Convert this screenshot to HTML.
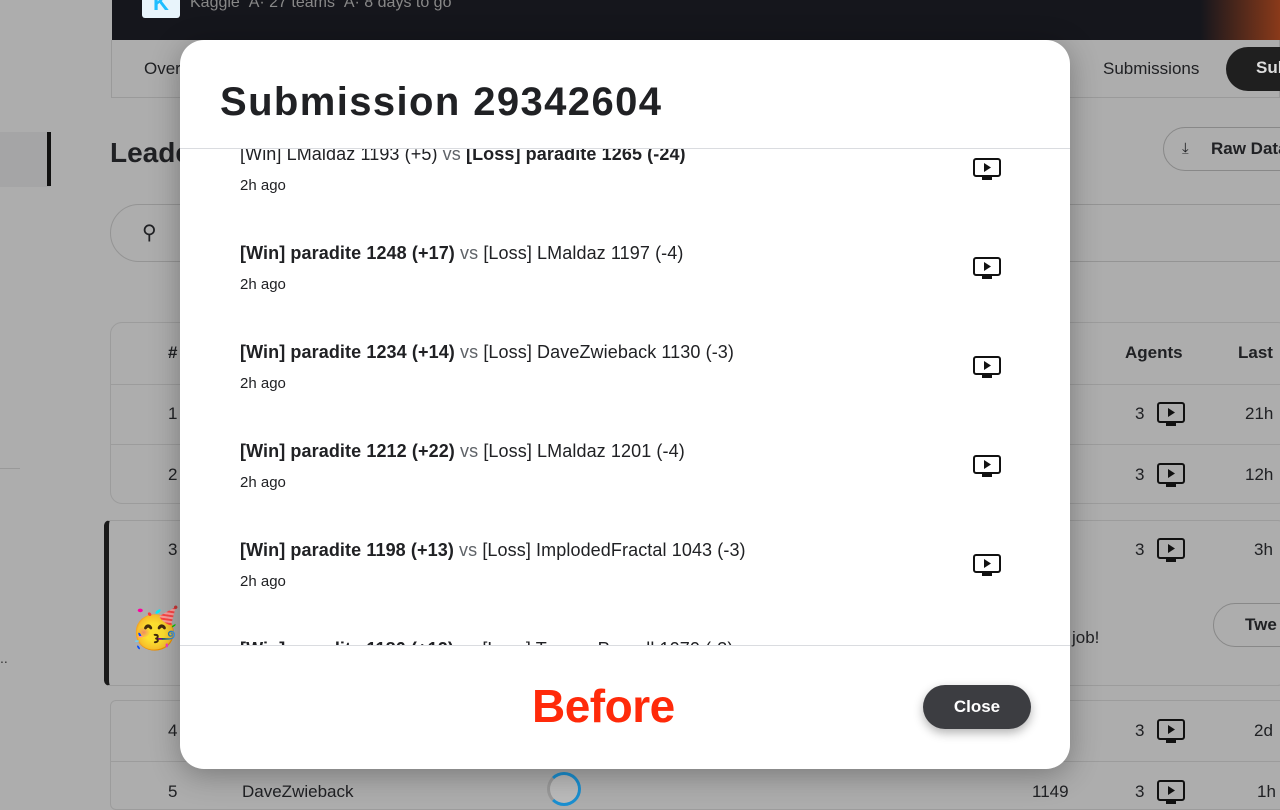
<!DOCTYPE html>
<html><head><meta charset="utf-8"><style>
*{margin:0;padding:0;box-sizing:border-box}
body{width:1280px;height:800px;overflow:hidden;background:#adadad;font-family:"Liberation Sans",Arial,sans-serif;position:relative;color:#202124}
.abs{position:absolute}
.hdr{left:112px;top:0;width:1168px;height:40px;background:#15161c}
.t{font-size:17px;color:#202124}
.modal{left:180px;top:40px;width:890px;height:729px;background:#fff;border-radius:24px;box-shadow:0 6px 30px rgba(0,0,0,.3);overflow:hidden}
.row{position:absolute;left:60px;font-size:18px;color:#202124}
.row .v{color:#5f6368}
.row .ago{position:absolute;left:0;top:33px;font-size:15px;color:#202124;white-space:nowrap}
.row .main{white-space:nowrap;letter-spacing:0.1px}
</style></head><body>
<div class="abs hdr"></div>
<div class="abs" style="left:142px;top:-8px;width:38px;height:26px;background:#e8f4fb;border-radius:3px;color:#20beff;font-weight:bold;font-size:22px;text-align:center;line-height:22px">K</div>
<div class="abs" style="left:190px;top:-6px;color:#888;font-size:16px">Kaggle &nbsp;A· 27 teams &nbsp;A· 8 days to go</div>
<div class="abs" style="left:1200px;top:0;width:80px;height:40px;background:linear-gradient(90deg,#15161c,#8a3a1a)"></div>
<div class="abs" style="left:111px;top:40px;width:1169px;height:58px;border:1px solid #9a9a9a;border-top:none"></div>
<div class="abs" style="left:144px;top:59px;font-size:17px">Over</div>
<div class="abs" style="left:1103px;top:59px;font-size:17px">Submissions</div>
<div class="abs" style="left:1226px;top:47px;width:80px;height:44px;background:#1f1f1f;border-radius:22px;color:#ddd;font-weight:bold;font-size:17px;padding:11px 30px">Sub</div>
<div class="abs" style="left:0;top:132px;width:50px;height:55px;background:#a5a5a6"></div>
<div class="abs" style="left:47px;top:132px;width:4px;height:54px;background:#111"></div>
<div class="abs" style="left:0;top:468px;width:20px;height:1px;background:#999"></div>
<div class="abs" style="left:0;top:650px;font-size:14px;color:#333">..</div>
<div class="abs" style="left:110px;top:137px;font-size:28px;font-weight:bold">Leaderboard</div>
<div class="abs" style="left:1163px;top:127px;width:140px;height:44px;border:1px solid #888;border-radius:22px;font-weight:bold;font-size:17px;padding:11px 0 0 47px">Raw Data</div>
<div class="abs" style="left:1182px;top:140px;font-size:15px">⤓</div>
<div class="abs" style="left:110px;top:204px;width:1200px;height:58px;border:1px solid #949494;border-radius:29px"></div>
<div class="abs" style="left:142px;top:220px;font-size:20px">⚲</div>
<div class="abs" style="left:110px;top:322px;width:1180px;height:182px;border:1px solid #9c9c9c;border-radius:12px"></div>
<div class="abs" style="left:110px;top:384px;width:1180px;height:1px;background:#9c9c9c"></div>
<div class="abs" style="left:110px;top:444px;width:1180px;height:1px;background:#9c9c9c"></div>
<div class="abs" style="left:104px;top:520px;width:1180px;height:166px;border:1px solid #9c9c9c;border-left:5px solid #1a1a1a;border-radius:6px"></div>
<div class="abs" style="left:110px;top:700px;width:1180px;height:110px;border:1px solid #9c9c9c;border-radius:6px"></div>
<div class="abs" style="left:110px;top:761px;width:1180px;height:1px;background:#9c9c9c"></div>
<div class="abs" style="left:168px;top:343px;font-weight:bold;font-size:17px">#</div>
<div class="abs t" style="left:168px;top:404px">1</div>
<div class="abs t" style="left:168px;top:465px">2</div>
<div class="abs t" style="left:168px;top:540px">3</div>
<div class="abs t" style="left:168px;top:721px">4</div>
<div class="abs t" style="left:168px;top:782px">5</div>
<div class="abs t" style="left:242px;top:782px">DaveZwieback</div>
<div class="abs" style="left:130px;top:606px;font-size:40px;line-height:46px">🥳</div>
<div class="abs" style="left:547px;top:772px;width:34px;height:34px;border-radius:50%;border:3px solid #1a8fd0;border-left-color:#999;background:#bbb"></div>
<div class="abs t" style="left:1032px;top:782px">1149</div>
<div class="abs" style="left:1125px;top:343px;font-weight:bold;font-size:17px">Agents</div>
<div class="abs" style="left:1238px;top:343px;font-weight:bold;font-size:17px">Last</div>
<div class="abs t" style="left:1135px;top:404px">3</div><div class="abs t" style="left:1245px;top:404px">21h</div>
<div class="abs t" style="left:1135px;top:465px">3</div><div class="abs t" style="left:1245px;top:465px">12h</div>
<div class="abs t" style="left:1135px;top:540px">3</div><div class="abs t" style="left:1254px;top:540px">3h</div>
<div class="abs t" style="left:1135px;top:721px">3</div><div class="abs t" style="left:1254px;top:721px">2d</div>
<div class="abs t" style="left:1135px;top:782px">3</div><div class="abs t" style="left:1257px;top:782px">1h</div>
<div class="abs t" style="left:1072px;top:628px">job!</div>
<div class="abs" style="left:1213px;top:603px;width:100px;height:44px;border:1px solid #888;border-radius:22px;font-weight:bold;font-size:17px;padding:11px 0 0 31px">Twe</div>
<svg class="abs" style="left:1157px;top:402px" width="28" height="26" viewBox="0 0 28 26"><rect x="1" y="1" width="26" height="19" rx="2" fill="none" stroke="#111" stroke-width="2"/><path d="M11 6v9l7-4.5z" fill="#111"/><rect x="9" y="21" width="10" height="3" fill="#111"/></svg>
<svg class="abs" style="left:1157px;top:463px" width="28" height="26" viewBox="0 0 28 26"><rect x="1" y="1" width="26" height="19" rx="2" fill="none" stroke="#111" stroke-width="2"/><path d="M11 6v9l7-4.5z" fill="#111"/><rect x="9" y="21" width="10" height="3" fill="#111"/></svg>
<svg class="abs" style="left:1157px;top:538px" width="28" height="26" viewBox="0 0 28 26"><rect x="1" y="1" width="26" height="19" rx="2" fill="none" stroke="#111" stroke-width="2"/><path d="M11 6v9l7-4.5z" fill="#111"/><rect x="9" y="21" width="10" height="3" fill="#111"/></svg>
<svg class="abs" style="left:1157px;top:719px" width="28" height="26" viewBox="0 0 28 26"><rect x="1" y="1" width="26" height="19" rx="2" fill="none" stroke="#111" stroke-width="2"/><path d="M11 6v9l7-4.5z" fill="#111"/><rect x="9" y="21" width="10" height="3" fill="#111"/></svg>
<svg class="abs" style="left:1157px;top:780px" width="28" height="26" viewBox="0 0 28 26"><rect x="1" y="1" width="26" height="19" rx="2" fill="none" stroke="#111" stroke-width="2"/><path d="M11 6v9l7-4.5z" fill="#111"/><rect x="9" y="21" width="10" height="3" fill="#111"/></svg>

<div class="abs modal">
  <div class="abs" style="left:40px;top:40px;font-size:40px;font-weight:bold;color:#202124;letter-spacing:1.4px">Submission 29342604</div>
  <div class="abs" style="left:0;top:108px;width:890px;height:1px;background:#dadce0"></div>
  <div class="abs" style="left:0;top:109px;width:890px;height:496px;overflow:hidden">
    <div class="row" style="top:-5px"><div class="main">[Win] LMaldaz 1193 (+5) <span class="v">vs</span> <b>[Loss] paradite 1265 (-24)</b></div><div class="ago">2h ago</div></div>
    <div class="row" style="top:94px"><div class="main"><b>[Win] paradite 1248 (+17)</b> <span class="v">vs</span> [Loss] LMaldaz 1197 (-4)</div><div class="ago">2h ago</div></div>
    <div class="row" style="top:193px"><div class="main"><b>[Win] paradite 1234 (+14)</b> <span class="v">vs</span> [Loss] DaveZwieback 1130 (-3)</div><div class="ago">2h ago</div></div>
    <div class="row" style="top:292px"><div class="main"><b>[Win] paradite 1212 (+22)</b> <span class="v">vs</span> [Loss] LMaldaz 1201 (-4)</div><div class="ago">2h ago</div></div>
    <div class="row" style="top:391px"><div class="main"><b>[Win] paradite 1198 (+13)</b> <span class="v">vs</span> [Loss] ImplodedFractal 1043 (-3)</div><div class="ago">2h ago</div></div>
    <div class="row" style="top:490px"><div class="main"><b>[Win] paradite 1186 (+12)</b> <span class="v">vs</span> [Loss] TrumanPurnell 1070 (-3)</div><div class="ago">2h ago</div></div>
    <svg class="abs" style="left:793px;top:9px" width="28" height="24" viewBox="0 0 28 24"><rect x="1" y="1" width="26" height="17" rx="2" fill="none" stroke="#111" stroke-width="2"/><path d="M11 5v9l7-4.5z" fill="#111"/><rect x="9" y="19" width="10" height="3" fill="#111"/></svg>
    <svg class="abs" style="left:793px;top:108px" width="28" height="24" viewBox="0 0 28 24"><rect x="1" y="1" width="26" height="17" rx="2" fill="none" stroke="#111" stroke-width="2"/><path d="M11 5v9l7-4.5z" fill="#111"/><rect x="9" y="19" width="10" height="3" fill="#111"/></svg>
    <svg class="abs" style="left:793px;top:207px" width="28" height="24" viewBox="0 0 28 24"><rect x="1" y="1" width="26" height="17" rx="2" fill="none" stroke="#111" stroke-width="2"/><path d="M11 5v9l7-4.5z" fill="#111"/><rect x="9" y="19" width="10" height="3" fill="#111"/></svg>
    <svg class="abs" style="left:793px;top:306px" width="28" height="24" viewBox="0 0 28 24"><rect x="1" y="1" width="26" height="17" rx="2" fill="none" stroke="#111" stroke-width="2"/><path d="M11 5v9l7-4.5z" fill="#111"/><rect x="9" y="19" width="10" height="3" fill="#111"/></svg>
    <svg class="abs" style="left:793px;top:405px" width="28" height="24" viewBox="0 0 28 24"><rect x="1" y="1" width="26" height="17" rx="2" fill="none" stroke="#111" stroke-width="2"/><path d="M11 5v9l7-4.5z" fill="#111"/><rect x="9" y="19" width="10" height="3" fill="#111"/></svg>
  </div>
  <div class="abs" style="left:0;top:605px;width:890px;height:1px;background:#dadce0"></div>
  <div class="abs" style="left:352px;top:638px;font-size:46px;font-weight:bold;color:#ff2a0a;line-height:56px;letter-spacing:-0.5px">Before</div>
  <div class="abs" style="left:743px;top:645px;width:108px;height:44px;background:#3c3d41;border-radius:22px;color:#fff;font-weight:bold;font-size:17px;text-align:center;line-height:44px;box-shadow:0 4px 10px rgba(0,0,0,.3)">Close</div>
</div>
</body></html>
